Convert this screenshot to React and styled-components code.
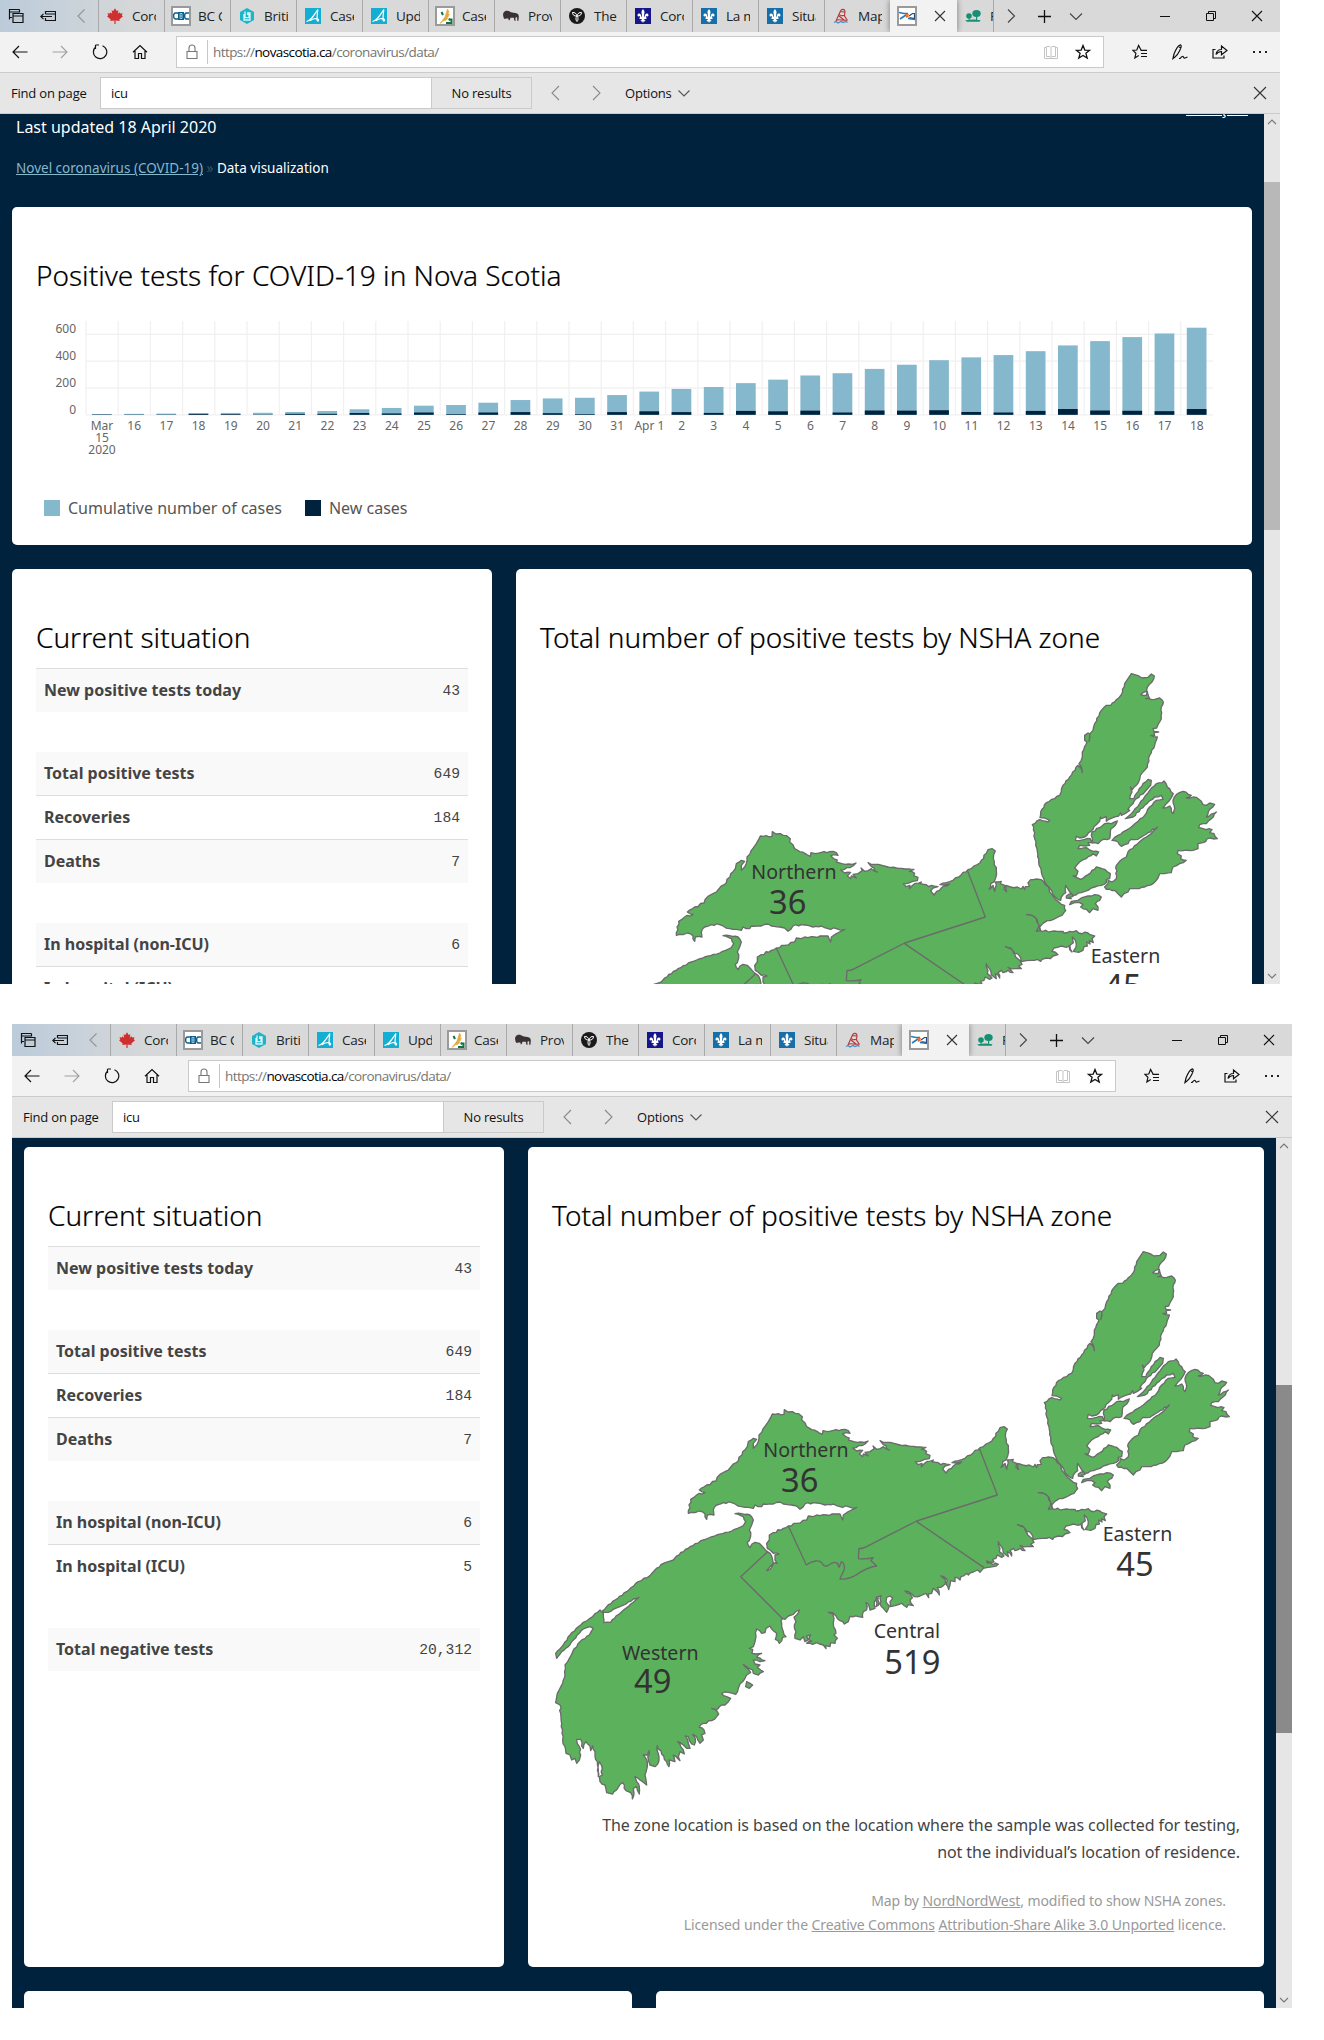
import React from "react";
import styled, { createGlobalStyle } from "styled-components";

const GlobalStyle = createGlobalStyle`
  * { box-sizing: border-box; }
  body {
    margin: 0;
    background: #fff;
    font-family: "Noto Sans", "Open Sans", sans-serif;
    color: #444;
  }
`;

const Canvas = styled.main`
  width: 1324px;
  height: 2040px;
  display: flex;
  flex-direction: column;
  gap: 40px;
  overflow: hidden;
`;

/* ---------- browser window ---------- */

const Window = styled.section`
  width: 1280px;
  height: 984px;
  margin-left: ${(p) => p.$indent}px;
  display: flex;
  flex-direction: column;
  flex: none;
  overflow: hidden;
`;

const TabStrip = styled.header`
  height: 32px;
  display: flex;
  background: linear-gradient(90deg, #bccbda 0, #c9d2da 70px, #d5d7d8 130px, #d9d9d9 240px);
  color: #222;
  font: 13.5px "Open Sans", sans-serif;
`;

const Slot = styled.span`
  width: ${(p) => p.$w || 40}px;
  height: 100%;
  display: flex;
  align-items: center;
  justify-content: center;
  flex: none;
`;

const Tab = styled.div`
  width: ${(p) => p.$w || 66}px;
  height: 32px;
  flex: none;
  display: flex;
  align-items: center;
  padding-left: 6px;
  border-left: 1px solid #a9a9a9;
  overflow: hidden;
`;

const ActiveTab = styled(Tab)`
  width: 67px;
  border-left-color: #f2f2f2;
  background: #f2f2f2;
  box-shadow: 0 0 6px rgba(0, 0, 0, 0.45);
  clip-path: inset(0 -8px 0 -8px);
  overflow: visible;
`;

const TrailingTab = styled(Tab)`
  width: 37px;
  border-left: 0;
  border-right: 1px solid #a9a9a9;
`;

const Favicon = styled.span`
  width: 20px;
  height: 20px;
  flex: none;
  display: flex;
  align-items: center;
  justify-content: center;
  ${(p) => p.$framed && "border: 2px solid #9a9a9a; background: #fff;"}
`;

const TabTitle = styled.span`
  margin-left: 7px;
  width: 24px;
  flex: none;
  overflow: hidden;
  white-space: nowrap;
  letter-spacing: -0.25px;
  line-height: 20px;
`;

const TabClose = styled.span`
  margin-left: 17px;
  width: 12px;
  display: flex;
`;

const WindowControls = styled.div`
  margin-left: auto;
  display: flex;
`;

const Toolbar = styled.nav`
  height: 41px;
  display: flex;
  background: #f2f2f2;
  border-bottom: 1px solid #cbcbcb;
`;

const AddressBar = styled.div`
  width: 928px;
  height: 32px;
  margin: 4px 16px 0;
  display: flex;
  align-items: center;
  background: #fff;
  border: 1px solid #cacaca;
  padding-right: 4px;
`;

const Divider = styled.span`
  width: 1px;
  height: 24px;
  background: #c8c8c8;
`;

const Url = styled.span`
  margin-left: 5px;
  flex: 1;
  font: 13.5px/20px "Open Sans", sans-serif;
  letter-spacing: -0.58px;
  color: #757575;
  b { font-weight: 400; color: #000; }
`;

const FindBar = styled.div`
  height: 41px;
  display: flex;
  align-items: center;
  background: #e6e6e6;
  border-bottom: 1px solid #cbcbcb;
  font: 13px/20px "Open Sans", sans-serif;
  letter-spacing: -0.2px;
  color: #111;
`;

const FindLabel = styled.span`
  width: 100px;
  padding-left: 11px;
  white-space: nowrap;
`;

const FindInput = styled.div`
  width: 332px;
  height: 32px;
  border: 1px solid #cacaca;
  background: #fff;
  padding: 5px 10px;
`;

const FindCount = styled.div`
  width: 100px;
  height: 32px;
  border: 1px solid #cacaca;
  border-left: 0;
  padding: 5px 0;
  text-align: center;
`;

const FindOptions = styled.span`
  margin-left: 8px;
  display: flex;
  align-items: center;
  gap: 6px;
`;

const Body = styled.div`
  height: 870px;
  display: flex;
  overflow: hidden;
`;

const Viewport = styled.div`
  width: 1264px;
  height: 870px;
  overflow: hidden;
  background: #00223d;
  padding: ${(p) => p.$top}px 12px 0;
`;

const Scrollbar = styled.div`
  width: 16px;
  height: 870px;
  background: #e6e6e6;
  display: flex;
  flex-direction: column;
  align-items: center;
`;

const ScrollArrow = styled.span`
  height: 16px;
  display: flex;
  align-items: center;
`;

const Thumb = styled.span`
  width: 16px;
  height: 348px;
  margin-top: ${(p) => p.$top - 16}px;
  margin-bottom: auto;
  background: ${(p) => p.$color};
`;

/* ---------- page ---------- */

const PageHeader = styled.div`
  height: 93px;
  padding: 0 4px;
  display: flex;
  justify-content: space-between;
  align-items: flex-start;
  color: #fff;
`;

const Updated = styled.p`
  margin: 1px 0 0;
  font-size: 16px;
  line-height: 24px;
`;

const Breadcrumb = styled.p`
  margin: 19px 0 0;
  font-size: 13.5px;
  line-height: 20px;
  a { color: #85b7cd; text-decoration: underline; }
  i { font-style: normal; color: #3d5266; }
`;

const French = styled.a`
  margin-top: -18px;
  line-height: 24px;
  text-decoration: underline;
`;

const Card = styled.article`
  width: ${(p) => p.$w}px;
  height: ${(p) => p.$h}px;
  flex: none;
  background: #fff;
  border-radius: 5px;
  padding: 49px 24px 0;
`;

const CardRow = styled.div`
  display: flex;
  gap: 24px;
  margin-top: ${(p) => p.$gap || 0}px;
`;

const Title = styled.h2`
  margin: 0;
  font-size: 28px;
  line-height: 38px;
  height: 39px;
  font-weight: 300;
  color: #000;
  white-space: nowrap;
  letter-spacing: -0.01px;
  -webkit-text-stroke: 0.2px #000;
`;

const ChartArt = styled.svg`
  display: block;
  margin-top: 26px;
  width: 1192px;
  height: 150px;
  text { font-family: "Noto Sans", sans-serif; font-size: 12px; fill: #666; }
`;

const Legend = styled.div`
  display: flex;
  align-items: center;
  margin: 25px 0 0 8px;
  height: 24px;
  font-size: 16px;
`;

const LegendItem = styled.span`
  display: flex;
  align-items: center;
  gap: 8px;
  margin-right: 23px;
  color: #555;
  &::before {
    content: "";
    width: 16px;
    height: 16px;
    background: ${(p) => p.$color};
  }
`;

const Stats = styled.div`
  margin-top: 11px;
  display: flex;
  flex-direction: column;
  gap: 40px;
`;

const StatGroup = styled.dl`
  margin: 0;
  border-top: ${(p) => (p.$ruled ? "1px solid #ddd" : "0")};
`;

const StatRow = styled.div`
  height: ${(p) => (p.$ruled ? 44 : 43)}px;
  padding: 0 8px 2px;
  display: flex;
  align-items: center;
  justify-content: space-between;
  background: ${(p) => (p.$shade ? "#f9f9f9" : "#fff")};
  border-top: ${(p) => (p.$ruled ? "1px solid #ddd" : "0")};
`;

const StatLabel = styled.dt`
  font-size: 16px;
  line-height: 22px;
  font-weight: 700;
`;

const StatValue = styled.dd`
  margin: 3px 0 0;
  font: 14.67px/20px "Liberation Mono", monospace;
`;

const MapArt = styled.svg`
  display: block;
  width: 688px;
  height: 566px;
  margin-top: 5px;
  text { font-family: "Noto Sans", sans-serif; fill: #333; }
`;

const Note = styled.p`
  margin: 6px 0 0;
  font-size: 16px;
  line-height: 27px;
  letter-spacing: -0.07px;
  text-align: right;
`;

const Credit = styled.p`
  margin: 23px 14px 0 0;
  font-size: 14px;
  line-height: 24px;
  letter-spacing: -0.09px;
  text-align: right;
  color: #999;
  a { text-decoration: underline; }
`;

/* ---------- icons ---------- */

const Line = ({ w = 16, h = 16, d, color = "#111", sw = 1.1 }) => (
  <svg width={w} height={h} viewBox={`0 0 ${w} ${h}`} fill="none" stroke={color} strokeWidth={sw}>
    <path d={d} />
  </svg>
);

const Fleur = ({ bg }) => (
  <svg width="16" height="16" viewBox="0 0 16 16">
    <rect width="16" height="16" fill={bg} />
    <path
      fill="#fff"
      d="M8 1c1 1.3 1.7 2.500 1.500 3.600C9.300 6 9 7 9 8.800h.6c.2-2 .9-3.400 2.300-3.300 1.600.1 2.200 2 .9 3.300-.3-.8-.9-1-1.400-.6-.5.400-.5.9-.4 1.300h.5v1.400H9.200c.1 1.200.7 1.600 1.500 1.700-.4.9-1.300.9-1.900.6L8 15l-.8-1.800c-.6.300-1.500.3-1.900-.6.8-.1 1.400-.5 1.500-1.700H4.500V9.500H5c.1-.4.100-.9-.4-1.300-.5-.4-1.100-.2-1.400.6-1.300-1.300-.7-3.200.9-3.300 1.400-.1 2.100 1.300 2.300 3.300H7C7 7 6.700 6 6.500 4.600 6.300 3.500 7 2.300 8 1z"
    />
  </svg>
);

const Alberta = () => (
  <svg width="16" height="16" viewBox="0 0 16 16">
    <rect width="16" height="16" fill="#15aed3" />
    <path
      d="M1.500 13.500C6 12.500 9 7.500 12.800 1.500c-.6 4-.9 8-.6 11 .8 1.500 2-.5 1-1.200-2-1.300-6-.6-8.200 1.500"
      fill="none"
      stroke="#fff"
      strokeWidth="1.200"
    />
  </svg>
);

const favicons = {
  maple: (
    <svg width="16" height="16" viewBox="0 0 16 16">
      <path
        fill="#cf2f2f"
        d="M8 .2l1.700 2.800 1.700-.8-.6 3.600 1.700-1.500.7 1.200 2.300-.3-.7 2.300 1.200.8-3.700 3.100.4 1.500-4.100-.5V16h-1.200v-3.600l-4.100.5.400-1.500L0 8.300l1.200-.8L.5 5.200l2.300.3.700-1.200 1.700 1.500-.6-3.600 1.700.8z"
      />
    </svg>
  ),
  cdc: (
    <svg width="16" height="16" viewBox="0 0 16 16">
      <rect x="5" y="4" width="6" height="8" fill="#0b5f8c" />
      <path d="M5 5H2.500Q.6 5 .6 8t1.900 3H5M16 5h-2.500q-1.900 0-1.900 3t1.900 3H16" fill="none" stroke="#0b5f8c" strokeWidth="1.400" />
      <path d="M7 5.500v5M7 5.500h2v5H7M7 8h2" fill="none" stroke="#b8dcec" strokeWidth=".8" />
    </svg>
  ),
  hex: (
    <svg width="16" height="16" viewBox="0 0 16 16">
      <path d="M8 0l7 4v8l-7 4-7-4V4z" fill="#1fb5c9" />
      <path d="M6 3.500v6.200h4V6.300H8M5 6v6h6V5H8" fill="none" stroke="#d9f6fa" strokeWidth="1.300" />
    </svg>
  ),
  alberta: <Alberta />,
  wheat: (
    <svg width="16" height="16" viewBox="0 0 16 16">
      <path d="M4.500 4l1.500 3M9 15h5.500v-3.500H12M12 10.500l1 2" fill="none" stroke="#11733f" strokeWidth="2" />
      <path d="M3 15.500L8 9l2.500-8 1.500 3-1.500 2.500 2-.5-1.500 3-2 1 2 .3-2.500 2.200-2 .3z" fill="#e2a93b" stroke="#e2a93b" strokeWidth=".6" />
    </svg>
  ),
  bison: (
    <svg width="16" height="16" viewBox="0 0 16 16">
      <path fill="#3a3234" d="M0 6.500C.3 4.500 1.500 3.300 3 2.800c1.700-.5 3.200.2 4.500 1.200 2 1 4.500.8 6.500 1.400 1.500.6 1.900 2 1.800 4l-.4 3.400h-1.300l.2-3-1.300-.8-.6 1.300.2 2.500h-1.200l-.6-3-3.300-.1-.6 2-1 .800-.6-2-1.800.1L1.500 11 .6 9.700z" />
    </svg>
  ),
  trillium: (
    <svg width="16" height="16" viewBox="0 0 16 16">
      <circle cx="8" cy="8" r="8" fill="#1a1a1a" />
      <path d="M3.500 4.500C5.500 4 7.500 5.500 8 8c.5-2.500 2.500-4 4.500-3.500 0 2-1.500 4-4.500 3.500 1.500 2 1.300 4 0 5.500-1.300-1.500-1.500-3.500 0-5.500-3 .5-4.500-1.500-4.500-3.500z" fill="none" stroke="#fff" strokeWidth="1" />
    </svg>
  ),
  navy: <Fleur bg="#15168a" />,
  blue: <Fleur bg="#176fa9" />,
  atlas: (
    <svg width="16" height="16" viewBox="0 0 16 16" fill="none">
      <path d="M3 13L7.500 3c1-2.500 4.500-2 4.500.5L11.500 8l3 4.500M7.500 3.500l4 .5M6.500 6.500C8 9 9 7 11.500 7.500M6 8l5 4M3 12.500c3-2 6 .5 11-.5" stroke="#b73535" strokeWidth="1.100" />
      <path d="M1 14.500l2-1 2 1.500 3-1.500 2 1 3-1 1.500 1" stroke="#3e8ec7" strokeWidth="1.200" />
    </svg>
  ),
  flag: (
    <svg width="16" height="16" viewBox="0 0 16 16" fill="none">
      <path d="M0 4.500l5 1h4M1 11l6-4M9 10.500l7 1" stroke="#2a79b5" strokeWidth="1.600" />
      <path d="M10 8l3.500-2.500H15.500v5l-5-1" stroke="#244a80" strokeWidth="1.200" />
      <path d="M7 6l2.500 3.500M9.500 6L7 9.500" stroke="#e0722f" strokeWidth="1.300" />
    </svg>
  ),
  trees: (
    <svg width="16" height="16" viewBox="0 0 16 16" fill="#178f70">
      <ellipse cx="11.500" cy="5.500" rx="4.200" ry="3.500" />
      <circle cx="4" cy="8" r="2.800" />
      <path d="M11 7h1.200v5H11zM3.600 9h1v3h-1zM0 12.500q8-2 15.500-.3l-1 1.500H2z" />
    </svg>
  ),
};

const tabs = [
  ["maple", "Coro"],
  ["cdc", "BC C", true],
  ["hex", "Briti"],
  ["alberta", "Case"],
  ["alberta", "Upd"],
  ["wheat", "Case", true],
  ["bison", "Prov"],
  ["trillium", "The"],
  ["navy", "Coro"],
  ["blue", "La m"],
  ["blue", "Situa"],
  ["atlas", "Map"],
];

const STAR = "M8 1.500l1.800 4.600 4.900.2-3.800 3 1.300 4.800L8 11.400l-4.200 2.700 1.300-4.800-3.800-3 4.900-.2z";

function Chrome() {
  return (
    <>
      <TabStrip>
        <Slot $w={32}>
          <Line d="M1.500 11.500v-10h10M1.500 4h10V1.500M1.500 9.500H4M5 5.500h10v9H5zM5 8h10" sw={1.200} />
        </Slot>
        <Slot $w={32}>
          <Line d="M5.500 6V3.500h10v9h-10V10M5.500 6h10M12 8.500H.8M3.500 5.800L.8 8.500l2.700 2.700" sw={1.200} />
        </Slot>
        <Slot $w={34}>
          <Line d="M11.500 1.500L5 8l6.500 6.500" color="#8f959b" />
        </Slot>
        {tabs.map(([icon, title, framed], i) => (
          <Tab key={i}>
            <Favicon $framed={framed}>{favicons[icon]}</Favicon>
            <TabTitle>{title}</TabTitle>
          </Tab>
        ))}
        <ActiveTab>
          <Favicon $framed>{favicons.flag}</Favicon>
          <TabClose>
            <Line w={12} h={12} d="M1 1l10 10M11 1L1 11" color="#333" />
          </TabClose>
        </ActiveTab>
        <TrailingTab>
          <Favicon>{favicons.trees}</Favicon>
          <TabTitle>P</TabTitle>
        </TrailingTab>
        <Slot $w={34}>
          <Line d="M5 1.500L11.500 8 5 14.500" color="#444" />
        </Slot>
        <Slot $w={32}>
          <Line d="M8.500 2v13M2 8.500h13" sw={1.300} />
        </Slot>
        <Slot $w={32}>
          <Line d="M2 5.500L8 11.500l6-6" color="#444" />
        </Slot>
        <WindowControls>
          <Slot $w={46}><Line w={10} h={10} d="M0 5.500h10" sw={1} /></Slot>
          <Slot $w={46}><Line w={10} h={10} d="M.5 2.500h7v7h-7zM2.500 2.500v-2h7v7h-2" sw={1} /></Slot>
          <Slot $w={46}><Line w={12} h={12} d="M1 1l10 10M11 1L1 11" /></Slot>
        </WindowControls>
      </TabStrip>
      <Toolbar>
        <Slot><Line d="M15.500 8H1M7 2L1 8l6 6" sw={1.200} /></Slot>
        <Slot><Line d="M.5 8H15M9 2l6 6-6 6" color="#a0a0a0" /></Slot>
        <Slot><Line d="M3.500 1v4M3.500 1H7M3.800 2.800A6.700 6.700 0 1 0 10.500 1.700" sw={1.200} /></Slot>
        <Slot><Line d="M1 8.300L8 1.500l7 6.800M3 7v7.500h3.500V9.500h3v5H13V7" sw={1.200} /></Slot>
        <AddressBar>
          <Slot $w={30}><Line d="M3 7.500h10v7H3zM5 7.500V4a3 3 0 0 1 6 0v3.500" color="#777" /></Slot>
          <Divider />
          <Url>https://<b>novascotia.ca</b>/coronavirus/data/</Url>
          <Slot $w={32}>
            <Line d="M8 3.500L7 2.500H3.500v10H7l1 1 1-1h3.500v-10H9zM8 3.500v10M3.500 3.500h-2v11h13v-11h-2" color="#c4c4c4" sw={1} />
          </Slot>
          <Slot $w={32}><Line d={STAR} sw={1.300} /></Slot>
        </AddressBar>
        <Slot><Line d="M8.500 6.300h6.500M9 9.500h6M9 12.500h6M9 6L6.600 1.500 4.800 6 .9 6.300l3 3-1 4.700 3.800-2.500" sw={1.200} /></Slot>
        <Slot><Line d="M1 14.500l1-4.500C4 5 6.500 1 8.500.8c1.500.5.5 3.200-1 6.200-1.500 3-3 5-4.500 6zM7 3l2 1M7 14.500h1c1-1 2-2.500 3-2s.5 2 2 1.500L15.500 13" sw={1.200} /></Slot>
        <Slot><Line d="M3.500 5.500H1v8.500h11v-2.500M4 10.500C4.500 7 6.500 5.500 9.500 5.500V2L15 6.500l-5.500 4.300V7.500C7 7.500 5.500 8.500 4 10.500z" sw={1.200} /></Slot>
        <Slot><Line d="M1 8h2M7 8h2M13 8h2" sw={2} color="#222" /></Slot>
      </Toolbar>
      <FindBar>
        <FindLabel>Find on page</FindLabel>
        <FindInput>icu</FindInput>
        <FindCount>No results</FindCount>
        <Slot $w={45}><Line d="M12 1L5 8l7 7" color="#8a8a8a" /></Slot>
        <Slot $w={40}><Line d="M4 1l7 7-7 7" color="#8a8a8a" /></Slot>
        <FindOptions>
          Options <Line w={12} h={12} d="M.5 3.500L6 9l5.500-5.500" color="#555" />
        </FindOptions>
        <WindowControls>
          <Slot><Line d="M2 2l12 12M14 2L2 14" color="#333" /></Slot>
        </WindowControls>
      </FindBar>
    </>
  );
}

/* ---------- chart ---------- */

const cumulative = [
  5, 7, 9, 12, 14, 15, 21, 28, 41, 51, 68, 73, 90, 110, 122, 127, 147, 173, 193, 207, 236, 262, 293, 310,
  342, 373, 407, 428, 445, 474, 517, 549, 579, 606, 649,
];
const fresh = [
  3, 2, 2, 7, 5, 2, 7, 7, 13, 10, 17, 5, 17, 20, 12, 5, 20, 26, 20, 14, 29, 26, 31, 17, 32, 31, 34, 21, 17,
  29, 43, 32, 30, 27, 43,
];
const PITCH = 32.2;
const UNIT = 0.1342;
const AXIS_X = 50;
const BASE_Y = 94;

const dayLabel = (i) => (i === 17 ? "Apr 1" : i < 17 ? String(15 + i) : String(i - 16));

function CasesChart() {
  return (
    <ChartArt viewBox="0 0 1192 150">
      <g transform="translate(0,-0.2)">
        {cumulative.map((_, i) => (
          <path key={i} d={`M${AXIS_X + i * PITCH} 0V${BASE_Y}`} stroke="#f0f0f0" strokeWidth="1.200" />
        ))}
        {[0, 200, 400, 600].map((v) => (
          <g key={v}>
            <path d={`M${AXIS_X} ${BASE_Y - v * UNIT}H1177`} stroke="#f0f0f0" strokeWidth="1.300" />
            <text x="40" y={BASE_Y - v * UNIT - 1.2} textAnchor="end">{v}</text>
          </g>
        ))}
        {cumulative.map((v, i) => {
          const x = AXIS_X + i * PITCH + 6;
          return (
            <g key={i}>
              <rect x={x} y={BASE_Y - v * UNIT} width="19.700" height={v * UNIT} fill="#85b7cd" />
              <rect x={x} y={BASE_Y - fresh[i] * UNIT} width="19.700" height={fresh[i] * UNIT} fill="#00223d" />
              {i > 0 && <text x={x + 10} y="109.500" textAnchor="middle">{dayLabel(i)}</text>}
            </g>
          );
        })}
        {["Mar", "15", "2020"].map((t, i) => (
          <text key={t} x={AXIS_X + 16} y={109.5 + i * 12} textAnchor="middle">{t}</text>
        ))}
      </g>
    </ChartArt>
  );
}

/* ---------- map ---------- */

/* Reads a list of shore points and serrates the longer stretches between them. */
const shore = (dx, dy, pts, rough = 2.6) => {
  const list = pts.trim().split(/\s+/).map((p) => p.split(",").map(Number));
  const out = [];
  list.forEach(([x, y], i) => {
    out.push(`${x + dx} ${y + dy}`);
    const next = list[i + 1];
    if (!next || !rough) return;
    const len = Math.hypot(next[0] - x, next[1] - y);
    const steps = Math.floor(len / 8);
    for (let k = 1; k < steps; k += 1) {
      const t = k / steps;
      const j = Math.sin((x + k * 37) * 12.9898 + (y + k * 11) * 78.233) * rough;
      const nx = x + (next[0] - x) * t - ((next[1] - y) / len) * j;
      const ny = y + (next[1] - y) * t + ((next[0] - x) / len) * j;
      out.push(`${(nx + dx).toFixed(1)} ${(ny + dy).toFixed(1)}`);
    }
  });
  return out.join("L");
};
const west = (pts, rough) => shore(0, 450, pts, rough);
const east = (pts, rough) => shore(1080, 0, pts, rough);

const mainland =
  "M" +
  west(`697,102 732,103 733,89 744,96 757,95 776,101 787,110 785,120 795,128 800,140 815,149 832,155 847,163
  849,152 862,155 880,151 905,149 925,152 930,160 908,161 928,174 925,180 942,185 962,186 984,183 975,192 956,197
  938,204 950,213 968,211 958,222 968,230 970,222 985,228 975,217 990,215 1003,206 999,198 1010,208 1030,200
  1048,210 1030,194 1020,182 1040,187 1062,190`) +
  "L" +
  east(`0,645 25,648 50,651 78,652 64,658 80,664 77,671 90,676 88,686 74,688 60,694 46,696 55,704 66,700 64,710
  74,700 82,694 100,690 96,695 115,698 123,704 130,700 150,704 135,708 128,717 138,729 146,718 160,708 185,696
  170,699 156,698 175,692 195,685 220,668 240,653 258,642 268,638 280,625 295,604 300,593 312,590 322,597 317,608
  319,630 325,655 323,678 318,690 308,695 303,712 315,700 320,718 325,698 322,690 340,688 337,695 350,700 348,712
  356,719 354,700 368,705 388,705 400,711 405,703 410,713 412,704 424,703 420,692 428,683 445,681 460,683 472,698
  482,705 485,720 498,736 510,748 520,757 530,760 529,768 533,776 522,790 505,798 487,806 478,806 465,814 455,825
  458,836 445,838 452,825 445,800 430,790 415,788 432,790 447,802 454,822 456,836
  490,838 525,838 528,843 545,838 565,836 572,843 600,843 606,848 620,852 612,860 616,872 604,866 606,876 596,870
  598,882 588,884 585,895 572,901 556,898 564,885 565,875 553,855 556,872 546,880 552,900 545,893 543,882 535,886
  520,882 508,886 498,888 492,898 510,908 495,912 487,920 475,918 462,922 458,928 448,922 430,925 415,926 400,929
  398,918 388,905 378,905 372,892 352,884 368,888 378,900 383,915 395,925 402,937 392,942 400,950 382,950 360,946
  375,962 360,955 345,962 340,955 330,962 335,978 322,965 325,980 310,968 305,950 295,935 300,955 298,965 312,978
  305,982 292,975 288,985 278,988 282,996 260,993 262,999 295,1003 280,1010 250,1015 240,1027 233,1020 220,1026
  205,1035 200,1030 183,1040 180,1050 165,1042 165,1055 152,1052 150,1065 146,1079 138,1062 142,1050 132,1040
  122,1038 135,1048 137,1060 122,1072 112,1072 118,1095 108,1082 100,1075 95,1090 85,1092 86,1103 78,1090 60,1098
  42,1100 35,1092 25,1085 15,1083 30,1092 37,1103 30,1110 40,1127 25,1124 20,1132 5,1120`) +
  "L" +
  west(`1080,672 1065,677 1052,680 1050,665 1058,655 1050,648 1040,652 1038,665 1048,678 1040,697 1030,685
  1020,672 1023,647 1015,650 1016,675 1008,680 1010,650 1003,665 1005,685 990,690 985,672 978,668 980,690 970,695
  968,712 955,710 930,709 925,725 913,732 900,722 888,708 878,698 865,697 878,702 882,715 880,730 888,760 882,765
  892,775 885,790 872,788 870,800 857,797 858,806 850,795 838,792 830,788 818,793 800,790 815,784 805,778 812,765
  800,768 805,780 795,785 790,770 780,780 775,778 765,775 768,755 763,735 768,725 762,712 770,705 778,690 760,703
  745,708 735,718 728,716 723,722 725,740 730,755 738,770 728,772 718,790 706,778 710,760 700,752 690,738 678,745
  675,758 665,760 650,747 648,770 645,785 640,800 628,805 638,808 636,820 648,822 665,820 650,832 675,842 660,845
  640,840 645,852 660,855 652,862 662,870 670,875 655,885 640,880 638,870 622,862 610,853 625,868 632,877 620,885
  610,903 600,912 595,925 587,943 565,937 545,940 560,950 572,955 565,965 555,975 545,975 533,987 515,985 530,992
  536,1002 530,1010 515,1022 490,1030 478,1042 492,1050 495,1060 485,1065 490,1080 480,1090 470,1070 458,1063
  466,1075 463,1095 450,1085 445,1070 436,1068 445,1090 450,1105 440,1105 430,1095 420,1088 413,1085 422,1100
  430,1110 433,1122 420,1115 415,1130 420,1142 408,1130 400,1125 405,1145 395,1142 387,1140 387,1160 380,1145
  365,1122 352,1097 350,1108 357,1130 357,1142 345,1160 330,1155 325,1140 327,1112 322,1125 310,1125 322,1145
  322,1160 315,1185 318,1200 320,1215 308,1205 300,1200 285,1190 290,1205 298,1220 298,1242 290,1220 280,1225
  282,1240 277,1257 272,1238 258,1232 248,1208 235,1222 222,1235 218,1242 200,1238 195,1215 180,1205 178,1190
  187,1185 184,1155 178,1145 174,1160 175,1190 172,1145 165,1130 165,1115 158,1098 152,1112 150,1098 138,1085
  130,1105 125,1098 122,1078 110,1078 118,1100 122,1125 118,1140 110,1150 105,1135 95,1140 90,1125 78,1120
  75,1100 68,1080 66,1060 65,1030 62,1000 60,975 47,968`) +
  "L" +
  west(`52,940 68,910 75,885 75,855 88,835 98,815 120,785 148,765
  160,745 150,740 130,747 118,760 100,780 85,800 65,815 50,835 47,820 70,795 90,765 115,740 130,727 150,715
  180,690 190,700 192,728 212,727 228,708 245,695 260,683 285,662 297,652 280,657 258,672 240,680 220,688 205,697
  190,697 188,692 200,680 225,660 260,635 295,605 330,587 345,570 370,550 400,540 410,528 450,500 490,480 530,465
  575,453 610,437 617,425 610,410 595,403 585,401 605,401 630,405 640,420`, 1.4) +
  "L" +
  west(`635,435 628,450 632,468 628,482 622,487
  630,503 636,492 645,487 658,490 668,500 678,512 690,520 697,535 700,550 690,560 680,572 695,562 705,548 712,550
  705,540 705,525 717,522 700,520 690,510 682,505 680,490 688,480 688,465 700,458 730,445 745,438 770,430 800,420
  805,408 820,410 830,405 860,405 885,402 900,402 908,420 910,405 925,395 950,382 940,385 925,380 900,380 880,372
  855,375 840,370 820,368 795,372 780,388 770,378 755,375 730,372 720,366 700,372 670,372 665,380 645,375 640,385
  625,382 605,380 585,372 575,368 550,368 530,375 520,390 522,405 502,405 500,418 495,402 478,393 465,398 445,400
  452,358 470,345 495,337 478,330 500,315 528,303 540,283 565,270 575,258 595,242 608,215 622,200 625,185 640,175
  650,178 640,190 640,205 650,195 655,185 657,165 670,145 685,125 697,102`) +
  "Z";

const capeBreton =
  "M" +
  east(`730,65 750,71 762,78 780,76 790,66 799,72 792,90 778,105 775,118 765,122 758,128 775,130 778,118 784,138
  773,140 800,142 815,138 826,150 820,165 820,200 810,218 806,228 795,230 798,238 812,240 798,242 800,250 788,250
  808,255 800,280 785,310 778,345 757,370 755,382 745,400 733,413 727,405 732,420 725,440 738,440 745,425 765,395
  780,382 790,385 788,400 770,420 745,440 735,455 720,472 725,475 712,484 700,490 698,482 692,492 675,497 655,508
  655,494 640,500 637,495 635,508 625,518 608,538 590,555 575,558 565,553 562,565 575,566 590,562 607,560 612,572
  600,572 605,580 590,582 575,580 570,590 595,587 615,598 632,600 625,612 615,605 595,620 575,630 560,648 570,658
  565,672 555,672 578,682 600,668 625,645 650,652 667,665 665,680 655,682 655,692 640,700 620,705 600,715 580,722
  555,730 545,720 533,700 533,722 520,735 518,745 510,742 495,728 485,708 470,690 460,660 452,630 447,590 440,560
  437,525 433,518 455,503 480,510 485,505 470,498 456,497 458,480 475,452 515,430 525,400 545,375 570,340 580,350
  583,362 580,345 573,335 583,315 583,300 597,270 590,265 590,250 600,243 605,245 603,268 606,245 615,235 620,215
  640,175 655,160 668,160 685,143 700,128 710,95`, 1.6) +
  "ZM" +
  east(`712,500 730,485 755,455 785,415 805,395 822,392 828,387 838,405 856,425 850,437 835,455 825,468 845,462
  855,485 860,470 855,445 865,428 885,418 910,430 895,438 925,436 940,448 945,458 955,460 965,453 980,457 965,472
  955,495 985,480 970,500 955,515 935,518 932,526 945,530 972,533 965,542 978,545 988,560 965,558 945,572 930,575
  930,590 915,595 890,595 870,595 868,605 880,612 878,620 895,625 875,635 855,645 850,662 830,665 815,665 810,678
  795,695 770,705 745,710 725,710 720,720 708,725 700,735 690,725 680,715 655,712 650,705 660,695 660,685 672,690
  685,680 685,640 695,628 715,615 720,600 760,565 790,545 808,525 780,542 750,562 730,562 720,575 700,583 690,570
  672,565 690,550 730,525 770,490 785,465 805,445 825,442 820,430 800,435 770,460 735,495`, 2) +
  "ZM" +
  east("612,540 635,527 650,515 670,515 688,507 680,522 668,532 665,560 640,565 630,575 612,573 610,550") +
  "ZM" +
  east(`570,745 580,738 600,732 620,728 640,735 635,745 622,755 630,765 630,775 615,770 605,782 595,772
  578,765 585,758 575,752 560,752 545,758 550,748`) +
  "ZM" +
  east("535,732 552,726 555,733 545,736 550,740 535,738") +
  "ZM" +
  west("620,905 630,910 638,915 628,925 617,920") +
  "Z";

const borders =
  "M" +
  west("683,515 602,590 728,716", 0) +
  "M" +
  west("745,438 799,555", 0) +
  "C815 993 840 985 850 1005Q858 1012 870 1003C885 992 895 998 897 1012C902 1012 900 985 910 1000C920 1018 905 1030 900 1047Q920 1050 945 1037Q980 1012 1010 1008L993 992 999 983Q985 988 955 986L957 955Q965 957 975 952L1130 873L1372 795L1318 655M1130 875L1332 1013";

const zones = [
  ["Northern", 670, 680, "36", 723, 785, true],
  ["Western", 246, 1290, "49", 282, 1390, false],
  ["Eastern", 1688, 933, "45", 1729, 1037, true],
  ["Central", 1001, 1223, "519", 1033, 1331, false],
];

function ZoneMap({ partial }) {
  return (
    <MapArt viewBox="36 30 2064 1698">
      <g stroke="#6b6b6b" strokeWidth="4" strokeLinejoin="round">
        <path d={mainland} fill="#5bb15c" />
        <path d={capeBreton} fill="#5bb15c" />
        <path d={borders} fill="none" />
      </g>
      {zones
        .filter((z) => !partial || z[6])
        .map(([name, x, y, n, nx, ny]) => (
          <g key={name}>
            <text x={x} y={y} fontSize="58.800">{name}</text>
            <text x={nx} y={ny} fontSize="98">{n}</text>
          </g>
        ))}
    </MapArt>
  );
}

/* ---------- cards ---------- */

const statGroups = [
  [["New positive tests today", "43"]],
  [["Total positive tests", "649"], ["Recoveries", "184"], ["Deaths", "7"]],
  [["In hospital (non-ICU)", "6"], ["In hospital (ICU)", "5"]],
  [["Total negative tests", "20,312"]],
];

function SituationRow({ gap, partial }) {
  const groups = partial ? statGroups.slice(0, 3) : statGroups;
  return (
    <CardRow $gap={gap}>
      <Card $w={480} $h={820}>
        <Title>Current situation</Title>
        <Stats>
          {groups.map((rows, g) => (
            <StatGroup key={g} $ruled={g === 0}>
              {rows.map(([label, value], i) => (
                <StatRow key={label} $shade={i % 2 === 0} $ruled={i > 0}>
                  <StatLabel>{label}</StatLabel>
                  {!(partial && value === "5") && <StatValue>{value}</StatValue>}
                </StatRow>
              ))}
            </StatGroup>
          ))}
        </Stats>
      </Card>
      <Card $w={736} $h={820}>
        <Title>Total number of positive tests by NSHA zone</Title>
        <ZoneMap partial={partial} />
        {!partial && (
          <>
            <Note>
              The zone location is based on the location where the sample was collected for testing,
              <br />
              not the individual’s location of residence.
            </Note>
            <Credit>
              Map by <a>NordNordWest</a>, modified to show NSHA zones.
              <br />
              Licensed under the <a>Creative Commons</a> <a>Attribution-Share Alike 3.0 Unported</a> licence.
            </Credit>
          </>
        )}
      </Card>
    </CardRow>
  );
}

function Scroll({ top, color }) {
  return (
    <Scrollbar>
      <ScrollArrow><Line w={10} h={10} d="M1 7l4-4 4 4" color="#777" /></ScrollArrow>
      <Thumb $top={top} $color={color} />
      <ScrollArrow><Line w={10} h={10} d="M1 3l4 4 4-4" color="#777" /></ScrollArrow>
    </Scrollbar>
  );
}

export default function App() {
  return (
    <Canvas>
      <GlobalStyle />
      <Window $indent={0}>
        <Chrome />
        <Body>
          <Viewport $top={0}>
            <PageHeader>
              <div>
                <Updated>Last updated 18 April 2020</Updated>
                <Breadcrumb>
                  <a>Novel coronavirus (COVID-19)</a> <i>»</i> Data visualization
                </Breadcrumb>
              </div>
              <French>Français</French>
            </PageHeader>
            <Card $w={1240} $h={338}>
              <Title>Positive tests for COVID-19 in Nova Scotia</Title>
              <CasesChart />
              <Legend>
                <LegendItem $color="#85b7cd">Cumulative number of cases</LegendItem>
                <LegendItem $color="#00223d">New cases</LegendItem>
              </Legend>
            </Card>
            <SituationRow gap={24} partial />
          </Viewport>
          <Scroll top={68} color="#b8b8b8" />
        </Body>
      </Window>
      <Window $indent={12}>
        <Chrome />
        <Body>
          <Viewport $top={9}>
            <SituationRow gap={0} />
            <CardRow $gap={24}>
              <Card $w={608} $h={120} />
              <Card $w={608} $h={120} />
            </CardRow>
          </Viewport>
          <Scroll top={247} color="#8a8a8a" />
        </Body>
      </Window>
    </Canvas>
  );
}
